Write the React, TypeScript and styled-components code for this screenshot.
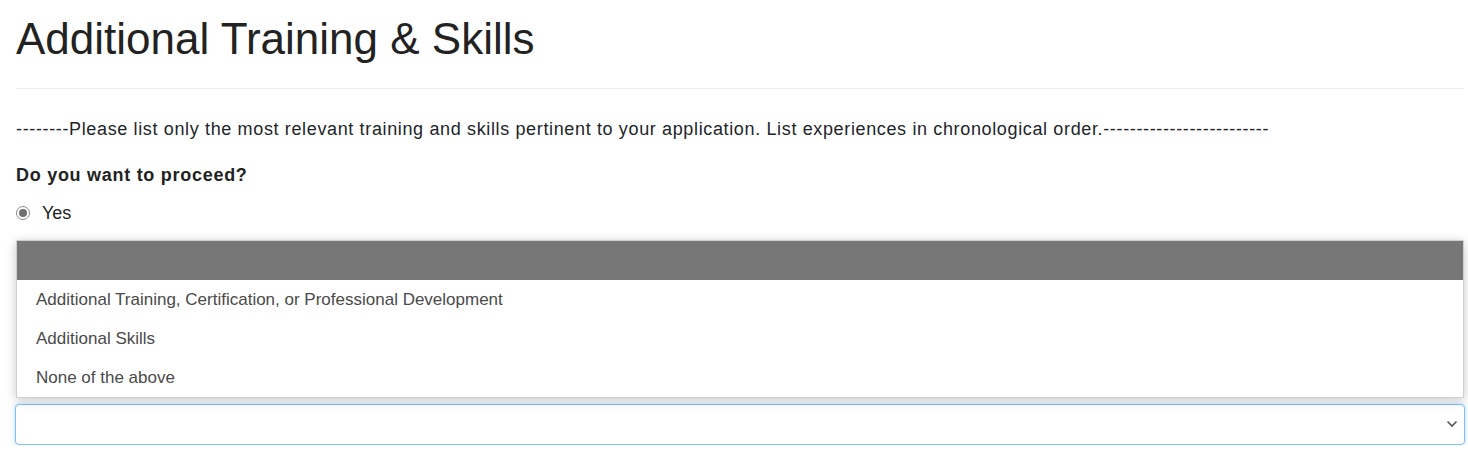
import React from "react";
import styled, { createGlobalStyle } from "styled-components";

const Global = createGlobalStyle`
  html, body { margin: 0; padding: 0; background: #fff; }
  body { font-family: "Liberation Sans", Arial, sans-serif; color: #212529; }
  * { box-sizing: border-box; }
`;

const Page = styled.div`
  padding: 0 4px 0 16px;
  display: flex;
  flex-direction: column;
`;

const Title = styled.h1`
  margin: 13px 0 0;
  font-size: 44px;
  font-weight: 400;
  line-height: 1.2;
  color: #222;
`;

const Rule = styled.hr`
  margin: 22px 0 0;
  border: 0;
  border-top: 1px solid #eeeeee;
  height: 0;
`;

const Intro = styled.p`
  margin: 28px 0 0;
  font-size: 18px;
  letter-spacing: 0.64px;
  line-height: 24px;
  color: #212529;
  white-space: nowrap;
`;

const Question = styled.div`
  margin-top: 22px;
  font-size: 18px;
  letter-spacing: 0.72px;
  font-weight: 700;
  line-height: 24px;
  color: #222;
`;

const RadioRow = styled.label`
  margin-top: 14px;
  display: flex;
  align-items: center;
  gap: 12px;
  font-size: 18px;
  line-height: 24px;
  color: #222;
`;

const RadioDot = styled.span`
  width: 14px;
  height: 14px;
  border-radius: 50%;
  border: 1px solid #8a8a8a;
  background: #fff;
  display: flex;
  align-items: center;
  justify-content: center;
  &::after {
    content: "";
    width: 8px;
    height: 8px;
    border-radius: 50%;
    background: #6f6f6f;
  }
`;

const SelectWrap = styled.div`
  position: relative;
  margin: 179px -1px 0;
  height: 41px;
`;

const SelectBox = styled.div`
  height: 41px;
  border: 1px solid #80bdff;
  border-radius: 4px;
  background: #fff;
  box-shadow: 0 0 5px rgba(102, 175, 233, 0.45);
  display: flex;
  align-items: center;
  justify-content: flex-end;
  padding-right: 6px;
`;

const Chevron = styled.svg`
  width: 12px;
  height: 8px;
  display: block;
`;

const Popup = styled.ul`
  position: absolute;
  left: 1px;
  right: 1px;
  bottom: calc(100% + 6px);
  margin: 0;
  padding: 0;
  list-style: none;
  background: #fff;
  border: 1px solid #cfcfcf;
  box-shadow: 0 2px 10px rgba(0, 0, 0, 0.22);
`;

const Option = styled.li<{ $selected?: boolean }>`
  height: 39px;
  padding: 2px 0 0 19px;
  display: flex;
  align-items: center;
  font-size: 17px;
  color: #4a4a4a;
  background: ${(p) => (p.$selected ? "#777777" : "#fff")};
`;

export default function App() {
  return (
    <>
      <Global />
      <Page>
        <Title>Additional Training &amp; Skills</Title>
        <Rule />
        <Intro>
          --------Please list only the most relevant training and skills pertinent to your application. List experiences in chronological order.-------------------------
        </Intro>
        <Question>Do you want to proceed?</Question>
        <RadioRow>
          <RadioDot />
          Yes
        </RadioRow>
        <SelectWrap>
          <Popup>
            <Option $selected />
            <Option>Additional Training, Certification, or Professional Development</Option>
            <Option>Additional Skills</Option>
            <Option>None of the above</Option>
          </Popup>
          <SelectBox>
            <Chevron viewBox="0 0 12 8">
              <path d="M1.5 1.5 L6 6 L10.5 1.5" fill="none" stroke="#555" strokeWidth="1.6" />
            </Chevron>
          </SelectBox>
        </SelectWrap>
      </Page>
    </>
  );
}
